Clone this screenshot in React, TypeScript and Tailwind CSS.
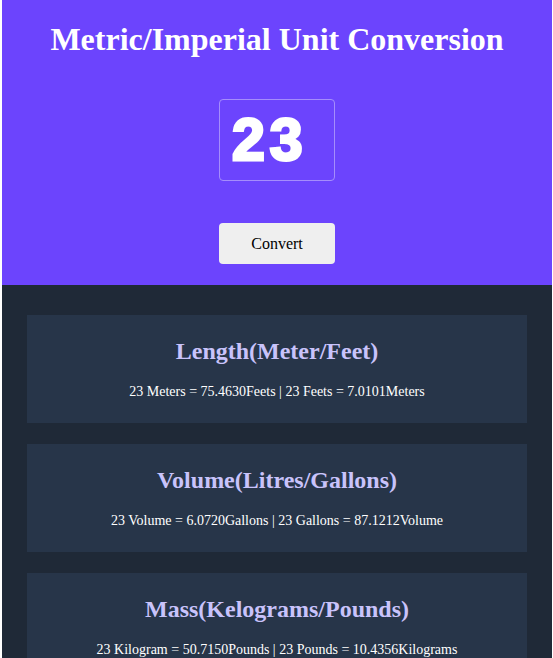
import { useState } from "react";

const serif = { fontFamily: '"Liberation Serif", "Times New Roman", serif' };

const results = [
  {
    title: "Length(Meter/Feet)",
    line: (n: number) =>
      `${n} Meters = ${(n * 3.281).toFixed(4)}Feets | ${n} Feets = ${(n / 3.281).toFixed(4)}Meters`,
  },
  {
    title: "Volume(Litres/Gallons)",
    line: (n: number) =>
      `${n} Volume = ${(n * 0.264).toFixed(4)}Gallons | ${n} Gallons = ${(n / 0.264).toFixed(4)}Volume`,
  },
  {
    title: "Mass(Kelograms/Pounds)",
    line: (n: number) =>
      `${n} Kilogram = ${(n * 2.205).toFixed(4)}Pounds | ${n} Pounds = ${(n / 2.204).toFixed(4)}Kilograms`,
  },
];

export default function App() {
  const [value, setValue] = useState("23");
  const n = Number(value) || 0;

  return (
    <div className="bg-white pl-[2px] pr-[1px] h-[658px] overflow-hidden" style={serif}>
      {/* header */}
      <div className="bg-[#6c44fd] h-[285px] flex flex-col items-center pt-[21px]">
        <h1 className="text-[32px] font-bold text-white leading-[37px]">
          Metric/Imperial Unit Conversion
        </h1>
        <input
          value={value}
          onChange={(e) => setValue(e.target.value)}
          className="mt-[41px] w-[116px] h-[82px] bg-transparent border border-[#a58dfc] rounded-[4px] pl-[12px] pr-0 text-white text-[59px] font-black tracking-[5px] [-webkit-text-stroke:3px_white] outline-none"
          style={{ fontFamily: '"Liberation Sans", Arial, sans-serif' }}
        />
        <button className="mt-[42px] w-[116px] h-[41px] bg-[#efefef] rounded-[4px] text-[16px] text-black">
          Convert
        </button>
      </div>

      {/* results */}
      <div className="bg-[#1f2937] px-[25px] pt-[30px] flex flex-col gap-[21px] pb-8">
        {results.map((r) => (
          <div key={r.title} className="bg-[#273549] w-[500px] pt-[22px] pb-[22px] text-center">
            <h2 className="text-[24px] font-bold text-[#c9c3fb] leading-[28px]">{r.title}</h2>
            <p className="mt-[18px] text-[14px] text-white leading-[18px]">{r.line(n)}</p>
          </div>
        ))}
      </div>
    </div>
  );
}
